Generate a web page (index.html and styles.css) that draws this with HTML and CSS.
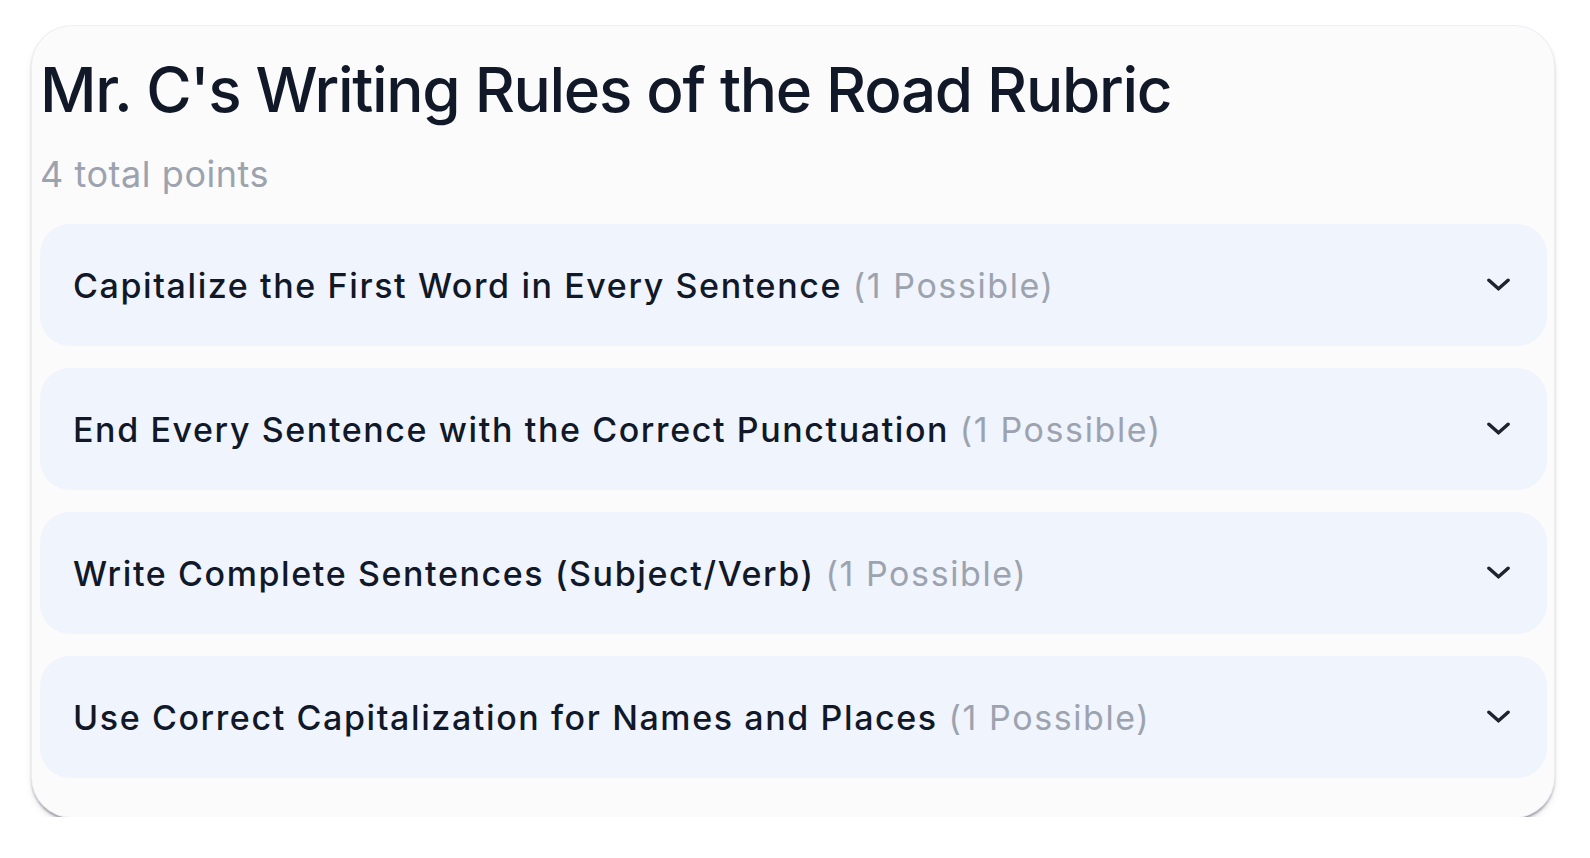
FILE: index.html
```html
<!DOCTYPE html>
<html lang="en">
<head>
<meta charset="utf-8">
<title>Rubric</title>
<link rel="stylesheet" href="styles.css">
</head>
<body>
<main class="card">
  <h1 class="title">Mr. C's Writing Rules of the Road Rubric</h1>
  <p class="total">4 total points</p>
  <div class="rows">
    <div class="row"><span class="label">Capitalize the First Word in Every Sentence <span class="pts">(1 Possible)</span></span><svg class="chev" viewBox="0 0 24 14"><path d="M2 2 L12 11 L22 2"/></svg></div>
    <div class="row"><span class="label">End Every Sentence with the Correct Punctuation <span class="pts">(1 Possible)</span></span><svg class="chev" viewBox="0 0 24 14"><path d="M2 2 L12 11 L22 2"/></svg></div>
    <div class="row"><span class="label">Write Complete Sentences (Subject/Verb) <span class="pts">(1 Possible)</span></span><svg class="chev" viewBox="0 0 24 14"><path d="M2 2 L12 11 L22 2"/></svg></div>
    <div class="row"><span class="label">Use Correct Capitalization for Names and Places <span class="pts">(1 Possible)</span></span><svg class="chev" viewBox="0 0 24 14"><path d="M2 2 L12 11 L22 2"/></svg></div>
  </div>
</main>
</body>
</html>
```
FILE: styles.css
```css
html, body {
  margin: 0;
  padding: 0;
  background: #ffffff;
  font-family: Inter, "Noto Sans", sans-serif;
}
.card {
  margin: 26px 36px 0 32px;
  padding: 22px 7px 39px 8px;
  background: #fbfbfc;
  border-radius: 40px;
  box-shadow: 0 0 0 1px #eceef2, 0 3px 3px rgba(60, 64, 80, 0.55), 0 6px 10px rgba(0, 0, 0, 0.07);
}
.title {
  margin: 0;
  font-size: 62px;
  font-weight: 500;
  line-height: 84px;
  color: #111827;
  letter-spacing: -1.3px;
}
.total {
  margin: 13px 0 21px;
  font-size: 36px;
  line-height: 58px;
  color: #9ca3af;
  letter-spacing: 0.55px;
}
.rows {
  display: flex;
  flex-direction: column;
  gap: 22px;
}
.row {
  height: 122px;
  border-radius: 30px;
  background: #f0f4fd;
  display: flex;
  align-items: center;
  justify-content: space-between;
  padding: 0 37px 0 33px;
}
.label {
  font-size: 34px;
  font-weight: 500;
  color: #111827;
  letter-spacing: 1.6px;
}
.pts {
  font-weight: 400;
  color: #9ca3af;
}
.chev {
  width: 23px;
  height: 14px;
  fill: none;
  stroke: #1f2330;
  stroke-width: 3.6;
  stroke-linecap: round;
  stroke-linejoin: round;
}
```
